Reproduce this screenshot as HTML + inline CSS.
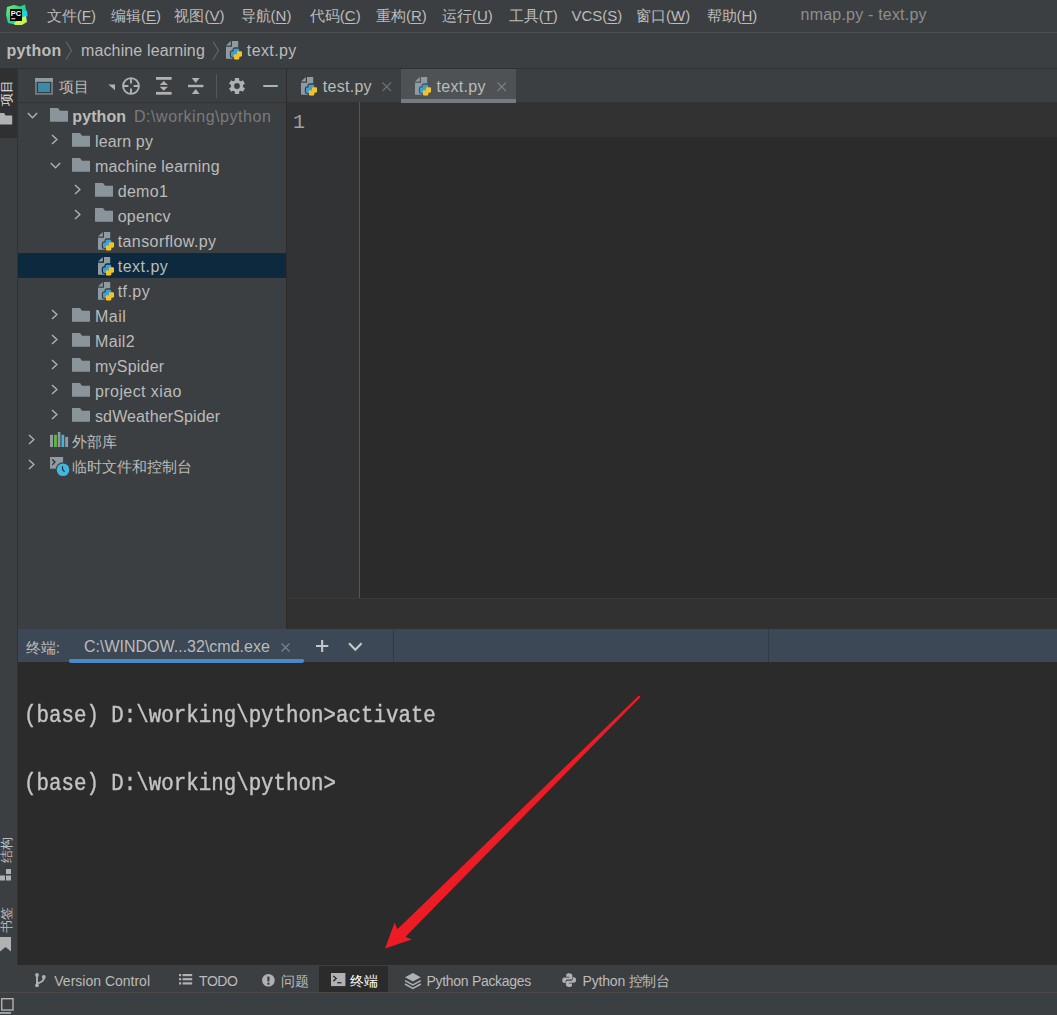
<!DOCTYPE html>
<html><head><meta charset="utf-8">
<style>
*{margin:0;padding:0;box-sizing:border-box}
html,body{width:1057px;height:1015px;overflow:hidden;background:#3c3f41}
body{position:relative;font-family:"Liberation Sans",sans-serif;color:#bbbbbb;font-size:16px}
.a{position:absolute}
.t{position:absolute;white-space:nowrap;line-height:1}
.m{font-family:"Liberation Mono",monospace}
u{text-decoration:underline;text-underline-offset:1.5px;text-decoration-thickness:1px}
svg{position:absolute;overflow:visible}
</style></head><body>
<svg width="0" height="0" style="position:absolute">
<defs>
<symbol id="py" viewBox="0 0 12 12">
<path fill="#3d9fd6" d="M5.9,0.3C3.6,0.3 3.6,1.3 3.6,2.2V3.2H6.2V3.8H2.1C0.9,3.8 0.2,4.7 0.2,6.1C0.2,7.6 0.9,8.4 2.1,8.4H3V7.1C3,6.1 3.8,5.4 4.7,5.4H7.3C8.1,5.4 8.7,4.7 8.7,3.9V2.2C8.7,1.3 8,0.3 5.9,0.3Z"/>
<path fill="#f2c42a" d="M6.1,11.7C8.4,11.7 8.4,10.7 8.4,9.8V8.8H5.8V8.2H9.9C11.1,8.2 11.8,7.3 11.8,5.9C11.8,4.4 11.1,3.6 9.9,3.6H9V4.9C9,5.9 8.2,6.6 7.3,6.6H4.7C3.9,6.6 3.3,7.3 3.3,8.1V9.8C3.3,10.7 4,11.7 6.1,11.7Z"/>
</symbol>
<symbol id="pyl" viewBox="0 0 11.2 11.3">
<path fill="#3d9fd6" d="M4.1,0H6.9Q8.3,0 8.3,1.4V4.1Q8.3,5.5 6.9,5.5H5.2V7.1Q5.2,8.5 3.8,8.5H1.4Q0,8.5 0,7.1V4.4Q0,3 1.4,3H2.7V1.4Q2.7,0 4.1,0Z"/>
<path fill="#f2c42a" d="M7.1,11.3H4.3Q2.9,11.3 2.9,9.9V7.2Q2.9,5.8 4.3,5.8H6V4.2Q6,2.8 7.4,2.8H9.8Q11.2,2.8 11.2,4.2V6.9Q11.2,8.3 9.8,8.3H8.5V9.9Q8.5,11.3 7.1,11.3Z"/>
</symbol>
<mask id="pym" maskUnits="userSpaceOnUse" x="-2" y="-2" width="22" height="24">
<rect x="-2" y="-2" width="22" height="24" fill="#fff"/>
<g transform="translate(4.9,7.4)" stroke="#000" stroke-width="2.2" fill="#000">
<path d="M4.1,0H6.9Q8.3,0 8.3,1.4V4.1Q8.3,5.5 6.9,5.5H5.2V7.1Q5.2,8.5 3.8,8.5H1.4Q0,8.5 0,7.1V4.4Q0,3 1.4,3H2.7V1.4Q2.7,0 4.1,0Z"/>
<path d="M7.1,11.3H4.3Q2.9,11.3 2.9,9.9V7.2Q2.9,5.8 4.3,5.8H6V4.2Q6,2.8 7.4,2.8H9.8Q11.2,2.8 11.2,4.2V6.9Q11.2,8.3 9.8,8.3H8.5V9.9Q8.5,11.3 7.1,11.3Z"/>
</g></mask>
<symbol id="pyf" viewBox="0 0 17 19" overflow="visible">
<g mask="url(#pym)">
<path fill="#8f9ba3" d="M0,4.4L4.8,0.1V4.4Z"/>
<path fill="#8f9ba3" d="M6,0H12.2V17.7H0V5.8H6Z"/>
</g>
<use href="#pyl" x="4.9" y="7.4" width="11.2" height="11.3"/>
</symbol>
<symbol id="fold" viewBox="0 0 18 14">
<path fill="#8a949b" d="M0,0H8L10,2.8H18V13.8H0Z"/>
</symbol>
</defs></svg>

<div class="a" style="left:0;top:32px;width:1057px;height:1px;background:#4d4f51"></div>
<div class="a" style="left:0;top:68px;width:1057px;height:1px;background:#2f3132"></div>
<div class="a" style="left:0;top:69px;width:18px;height:69px;background:#2e3031"></div>
<div class="a" style="left:18px;top:102px;width:268px;height:1px;background:#313335"></div>
<div class="a" style="left:18px;top:253px;width:268px;height:25px;background:#0d293e"></div>
<div class="a" style="left:286px;top:69px;width:1px;height:560px;background:#2b2b2b"></div>
<div class="a" style="left:287px;top:102px;width:770px;height:496px;background:#2b2b2b"></div>
<div class="a" style="left:287px;top:102px;width:73px;height:496px;background:#313335"></div>
<div class="a" style="left:359px;top:102px;width:1px;height:496px;background:#555555"></div>
<div class="a" style="left:360px;top:102px;width:697px;height:35px;background:#323232"></div>
<div class="a" style="left:401px;top:69px;width:115px;height:33px;background:#4e5254"></div>
<div class="a" style="left:401px;top:99px;width:115px;height:4px;background:#767b82"></div>
<div class="a" style="left:287px;top:598px;width:770px;height:1px;background:#3a3a3a"></div>
<div class="a" style="left:287px;top:599px;width:770px;height:30px;background:#313131"></div>
<div class="a" style="left:18px;top:629px;width:1039px;height:33px;background:#3c4855"></div>
<div class="a" style="left:393px;top:629px;width:1px;height:33px;background:#2f3a45"></div>
<div class="a" style="left:768px;top:629px;width:1px;height:33px;background:#2f3a45"></div>
<div class="a" style="left:69px;top:659px;width:234.5px;height:4px;background:#4a88c7;border-radius:2px"></div>
<div class="a" style="left:18px;top:662px;width:1039px;height:303px;background:#2b2b2b"></div><div class="a" style="left:69px;top:659px;width:234.5px;height:4px;background:#4a88c7;border-radius:2px"></div><div class="a" style="left:17px;top:69px;width:1px;height:896px;background:#323232"></div>
<div class="a" style="left:319px;top:966px;width:69px;height:26px;background:#2b2b2b"></div>
<div class="a" style="left:0;top:992px;width:1057px;height:1px;background:#4a4a4a"></div>
<svg style="left:5px;top:4px" width="23" height="22" viewBox="0 0 23 22">
<defs><linearGradient id="lg1" x1="0" y1="0" x2="1" y2="1"><stop offset="0" stop-color="#7ef26a"/><stop offset="0.45" stop-color="#21d789"/><stop offset="1" stop-color="#1fc8a0"/></linearGradient>
<linearGradient id="lg2" x1="0" y1="0" x2="1" y2="1"><stop offset="0" stop-color="#fcf84a"/><stop offset="1" stop-color="#a8f25a"/></linearGradient></defs>
<path fill="url(#lg1)" d="M2,3L9,1L15,2.5L20,0.5L21,6L19,17L12,21L3,19L1,11Z"/>
<path fill="#21d0f0" d="M17,8L22,6.5L22.5,12L18,14Z"/>
<path fill="url(#lg2)" d="M9,19L16,14L21,12L22,18L17,21L10,21Z"/>
<rect x="5" y="5" width="12" height="12" fill="#000"/>
<text x="5.8" y="11.8" font-family="Liberation Sans" font-weight="bold" font-size="7.5" fill="#fff">PC</text>
<rect x="6.3" y="14.3" width="4" height="1" fill="#fff"/>
</svg>
<div class="t" style="left:46.8px;top:8.1px;font-size:15px">文件(<u>F</u>)</div>
<div class="t" style="left:111px;top:8.1px;font-size:15px">编辑(<u>E</u>)</div>
<div class="t" style="left:174.4px;top:8.1px;font-size:15px">视图(<u>V</u>)</div>
<div class="t" style="left:240.6px;top:8.1px;font-size:15px">导航(<u>N</u>)</div>
<div class="t" style="left:309.8px;top:8.1px;font-size:15px">代码(<u>C</u>)</div>
<div class="t" style="left:376px;top:8.1px;font-size:15px">重构(<u>R</u>)</div>
<div class="t" style="left:442px;top:8.1px;font-size:15px">运行(<u>U</u>)</div>
<div class="t" style="left:508.7px;top:8.1px;font-size:15px">工具(<u>T</u>)</div>
<div class="t" style="left:571.4px;top:8.1px;font-size:15px">VCS(<u>S</u>)</div>
<div class="t" style="left:636px;top:8.1px;font-size:15px">窗口(<u>W</u>)</div>
<div class="t" style="left:706.5px;top:8.1px;font-size:15px">帮助(<u>H</u>)</div>
<div class="t" style="left:800.6px;top:7.46px;font-size:16px;color:#8e8e8e;letter-spacing:0.2px">nmap.py - text.py</div>
<div class="t" style="left:6.5px;top:42.96px;font-size:16px;font-weight:bold;letter-spacing:0.3px">python</div>
<svg style="left:65px;top:41px" width="8" height="19"><path d="M1,0.5L6.5,9.5L1,18.5" fill="none" stroke="#60676c" stroke-width="1.2"/></svg>
<div class="t" style="left:81px;top:42.96px;font-size:16px;letter-spacing:0.13px">machine learning</div>
<svg style="left:211.5px;top:41px" width="8" height="19"><path d="M1,0.5L6.5,9.5L1,18.5" fill="none" stroke="#60676c" stroke-width="1.2"/></svg>
<svg style="left:225.8px;top:41px" width="17" height="19"><use href="#pyf" width="17" height="19"/></svg>
<div class="t" style="left:246.8px;top:42.96px;font-size:16px;letter-spacing:0.4px">text.py</div>
<div class="t" style="left:-7.5px;top:86px;font-size:13px;color:#e8e8e8;transform:rotate(-90deg);transform-origin:center">项目</div>
<svg style="left:-6px;top:113.3px" width="19" height="12"><path d="M0,0H10L11.6,2.4H18.2V11.4H0Z" fill="#afb1b3"/></svg>
<div class="t" style="left:-7.5px;top:843px;font-size:13px;color:#bbbbbb;transform:rotate(-90deg);transform-origin:center">结构</div>
<svg style="left:0;top:869px" width="12" height="12"><rect x="6" y="0" width="5" height="5" fill="#afb1b3"/><rect x="0" y="6.5" width="5" height="5" fill="#afb1b3"/><rect x="6" y="6.5" width="5" height="5" fill="#afb1b3"/></svg>
<div class="t" style="left:-7.5px;top:912.5px;font-size:13px;color:#bbbbbb;transform:rotate(-90deg);transform-origin:center">书签</div>
<svg style="left:0;top:937px" width="12" height="15"><path d="M0,0H11V14.5L5.5,10L0,14.5Z" fill="#afb1b3"/></svg>
<svg style="left:35px;top:78.3px" width="18" height="17"><rect x="0" y="0" width="18" height="16.8" fill="#737b82"/><rect x="0" y="0" width="18" height="3.8" fill="#8f9ba3"/><rect x="1.9" y="3.9" width="14.2" height="11" fill="#2f3436"/><rect x="2.9" y="4.8" width="12.2" height="9.2" fill="#3d89a8"/></svg>
<div class="t" style="left:59px;top:79.3px;font-size:15px">项目</div>
<svg style="left:108px;top:84px" width="8" height="7"><path d="M0.3,0.4H7V6.3Z" fill="#afb1b3"/></svg>
<svg style="left:122px;top:77px" width="18" height="18" viewBox="0 0 18 18"><circle cx="9" cy="9" r="7.9" fill="none" stroke="#afb1b3" stroke-width="1.9"/>
<path d="M9,1V6.4M9,11.6V17M1,9H6.4M11.6,9H17" stroke="#afb1b3" stroke-width="1.9"/></svg>
<svg style="left:156px;top:77px" width="16" height="18" viewBox="0 0 16 18"><rect x="0" y="0" width="15.6" height="2.8" fill="#afb1b3"/><rect x="0" y="14.9" width="15.6" height="2.8" fill="#afb1b3"/>
<path d="M7.8,3.9L12,7.9H3.6Z M7.8,13.8L12,9.8H3.6Z" fill="#afb1b3"/></svg>
<svg style="left:188px;top:78px" width="16" height="17" viewBox="0 0 16 17"><rect x="0" y="6.8" width="15.4" height="2.4" fill="#afb1b3"/>
<path d="M3.8,0H11.6L7.7,5Z M3.8,16H11.6L7.7,10.9Z" fill="#afb1b3"/></svg>
<div class="a" style="left:216px;top:74px;width:1px;height:24px;background:#555759"></div>
<svg style="left:228px;top:77px" width="18" height="18" viewBox="-9 -9 18 18"><g fill="#afb1b3"><circle r="6.1"/><rect x="-2.1" y="-8" width="4.2" height="4" transform="rotate(0)"/><rect x="-2.1" y="-8" width="4.2" height="4" transform="rotate(60)"/><rect x="-2.1" y="-8" width="4.2" height="4" transform="rotate(120)"/><rect x="-2.1" y="-8" width="4.2" height="4" transform="rotate(180)"/><rect x="-2.1" y="-8" width="4.2" height="4" transform="rotate(240)"/><rect x="-2.1" y="-8" width="4.2" height="4" transform="rotate(300)"/></g><circle r="2.9" fill="#3c3f41"/></svg>
<div class="a" style="left:262.6px;top:85px;width:15.2px;height:2.2px;background:#afb1b3;border-radius:1px"></div>
<svg style="left:27.2px;top:111.5px" width="12" height="8"><path d="M0.8,1L5.5,5.8L10.2,1" fill="none" stroke="#aeb0b2" stroke-width="1.4"/></svg>
<svg style="left:50px;top:108.2px" width="18" height="14"><use href="#fold" width="18" height="14"/></svg>
<div class="t" style="left:72.3px;top:109.46px;font-size:16px;letter-spacing:0.1px"><b>python</b></div>
<svg style="left:51.0px;top:134.4px" width="8" height="12"><path d="M1,0.9L5.9,5.5L1,10.1" fill="none" stroke="#aeb0b2" stroke-width="1.4"/></svg>
<svg style="left:72px;top:133.2px" width="18" height="14"><use href="#fold" width="18" height="14"/></svg>
<div class="t" style="left:95.0px;top:134.46px;font-size:16px;letter-spacing:0.14px">learn py</div>
<svg style="left:49.9px;top:161.5px" width="12" height="8"><path d="M0.8,1L5.5,5.8L10.2,1" fill="none" stroke="#aeb0b2" stroke-width="1.4"/></svg>
<svg style="left:72px;top:158.2px" width="18" height="14"><use href="#fold" width="18" height="14"/></svg>
<div class="t" style="left:95.0px;top:159.46px;font-size:16px;letter-spacing:0.18px">machine learning</div>
<svg style="left:73.7px;top:184.4px" width="8" height="12"><path d="M1,0.9L5.9,5.5L1,10.1" fill="none" stroke="#aeb0b2" stroke-width="1.4"/></svg>
<svg style="left:95px;top:183.2px" width="18" height="14"><use href="#fold" width="18" height="14"/></svg>
<div class="t" style="left:117.69999999999999px;top:184.46px;font-size:16px;letter-spacing:0.3px">demo1</div>
<svg style="left:73.7px;top:209.4px" width="8" height="12"><path d="M1,0.9L5.9,5.5L1,10.1" fill="none" stroke="#aeb0b2" stroke-width="1.4"/></svg>
<svg style="left:95px;top:208.2px" width="18" height="14"><use href="#fold" width="18" height="14"/></svg>
<div class="t" style="left:117.69999999999999px;top:209.46px;font-size:16px;letter-spacing:0.26px">opencv</div>
<svg style="left:98.0px;top:232.1px" width="17" height="19"><use href="#pyf" width="17" height="19"/></svg>
<div class="t" style="left:117.69999999999999px;top:234.46px;font-size:16px;letter-spacing:0.42px">tansorflow.py</div>
<svg style="left:98.0px;top:257.1px" width="17" height="19"><use href="#pyf" width="17" height="19"/></svg>
<div class="t" style="left:117.69999999999999px;top:259.46px;font-size:16px;letter-spacing:0.5px">text.py</div>
<svg style="left:98.0px;top:282.1px" width="17" height="19"><use href="#pyf" width="17" height="19"/></svg>
<div class="t" style="left:117.69999999999999px;top:284.46px;font-size:16px;letter-spacing:0.45px">tf.py</div>
<svg style="left:51.0px;top:309.4px" width="8" height="12"><path d="M1,0.9L5.9,5.5L1,10.1" fill="none" stroke="#aeb0b2" stroke-width="1.4"/></svg>
<svg style="left:72px;top:308.2px" width="18" height="14"><use href="#fold" width="18" height="14"/></svg>
<div class="t" style="left:95.0px;top:309.46px;font-size:16px;letter-spacing:0.5px">Mail</div>
<svg style="left:51.0px;top:334.4px" width="8" height="12"><path d="M1,0.9L5.9,5.5L1,10.1" fill="none" stroke="#aeb0b2" stroke-width="1.4"/></svg>
<svg style="left:72px;top:333.2px" width="18" height="14"><use href="#fold" width="18" height="14"/></svg>
<div class="t" style="left:95.0px;top:334.46px;font-size:16px;letter-spacing:0.33px">Mail2</div>
<svg style="left:51.0px;top:359.4px" width="8" height="12"><path d="M1,0.9L5.9,5.5L1,10.1" fill="none" stroke="#aeb0b2" stroke-width="1.4"/></svg>
<svg style="left:72px;top:358.2px" width="18" height="14"><use href="#fold" width="18" height="14"/></svg>
<div class="t" style="left:95.0px;top:359.46px;font-size:16px;letter-spacing:0.23px">mySpider</div>
<svg style="left:51.0px;top:384.4px" width="8" height="12"><path d="M1,0.9L5.9,5.5L1,10.1" fill="none" stroke="#aeb0b2" stroke-width="1.4"/></svg>
<svg style="left:72px;top:383.2px" width="18" height="14"><use href="#fold" width="18" height="14"/></svg>
<div class="t" style="left:95.0px;top:384.46px;font-size:16px;letter-spacing:0.42px">project xiao</div>
<svg style="left:51.0px;top:409.4px" width="8" height="12"><path d="M1,0.9L5.9,5.5L1,10.1" fill="none" stroke="#aeb0b2" stroke-width="1.4"/></svg>
<svg style="left:72px;top:408.2px" width="18" height="14"><use href="#fold" width="18" height="14"/></svg>
<div class="t" style="left:95.0px;top:409.46px;font-size:16px;letter-spacing:0.12px">sdWeatherSpider</div>
<div class="t" style="left:134px;top:109.46px;font-size:16px;color:#7a7a7a;letter-spacing:0.55px">D:\working\python</div>
<svg style="left:28.1px;top:434.4px" width="8" height="12"><path d="M1,0.9L5.9,5.5L1,10.1" fill="none" stroke="#aeb0b2" stroke-width="1.4"/></svg>
<svg style="left:49.9px;top:432px" width="19" height="16"><rect x="0" y="2.8" width="3" height="12.2" fill="#8f9ba3"/><rect x="4" y="2.8" width="2.9" height="12.2" fill="#62b543"/><rect x="7.8" y="0" width="2.6" height="15" fill="#8f9ba3"/><rect x="11.5" y="2.8" width="2.7" height="12.2" fill="#40b6e0"/><rect x="15.2" y="4.9" width="2.9" height="10.1" fill="#8f9ba3"/></svg>
<div class="t" style="left:71.8px;top:434.3px;font-size:15px">外部库</div>
<svg style="left:28.1px;top:459.4px" width="8" height="12"><path d="M1,0.9L5.9,5.5L1,10.1" fill="none" stroke="#aeb0b2" stroke-width="1.4"/></svg>
<svg style="left:49.9px;top:456.9px" width="22" height="20"><rect x="0" y="0" width="13.1" height="11.7" fill="#8f9ba3"/><path d="M2.3,2.5L5,5.1L2.3,7.7" fill="none" stroke="#2b2b2b" stroke-width="1.2"/>
<circle cx="13" cy="12.7" r="7.4" fill="#3c3f41"/><circle cx="13" cy="12.7" r="6.3" fill="#40b6e0"/><path d="M12.4,9.4L12.8,12.9L14.6,14.6" fill="none" stroke="#222" stroke-width="1.1"/></svg>
<div class="t" style="left:72px;top:459.3px;font-size:15px">临时文件和控制台</div>
<svg style="left:300.5px;top:77px" width="17" height="19"><use href="#pyf" width="17" height="19"/></svg>
<div class="t" style="left:322.7px;top:78.96px;font-size:16px;letter-spacing:0.3px">test.py</div>
<svg style="left:382px;top:81.6px" width="9.5" height="9.5"><path d="M0.5,0.5L9,9M9,0.5L0.5,9" stroke="#6f7173" stroke-width="1.1"/></svg>
<svg style="left:414.8px;top:77px" width="17" height="19"><use href="#pyf" width="17" height="19"/></svg>
<div class="t" style="left:436.6px;top:78.96px;font-size:16px;letter-spacing:0.3px">text.py</div>
<svg style="left:496.6px;top:81.6px" width="9.5" height="9.5"><path d="M0.5,0.5L9,9M9,0.5L0.5,9" stroke="#7d7f81" stroke-width="1.1"/></svg>
<div class="t m" style="left:293px;top:112.87px;font-size:20px;color:#a2a2a2">1</div>
<div class="t" style="left:25.7px;top:639.8px;font-size:15px">终端:</div>
<div class="t" style="left:84px;top:638.96px;font-size:16px">C:\WINDOW...32\cmd.exe</div>
<svg style="left:281px;top:642.5px" width="9" height="9"><path d="M0.5,0.5L8.5,8.5M8.5,0.5L0.5,8.5" stroke="#7b8592" stroke-width="1.1"/></svg>
<svg style="left:315.9px;top:640px" width="13" height="12"><path d="M6.15,0V12M0,6H12.3" stroke="#c4c7ca" stroke-width="2.1"/></svg>
<svg style="left:347.5px;top:641.5px" width="15" height="10"><path d="M1,1.2L7.3,7.8L13.6,1.2" fill="none" stroke="#c6c9cc" stroke-width="2.1"/></svg>
<div class="t m" style="left:24px;top:707.06px;font-size:20.8px;color:#c4c4c4;-webkit-text-stroke:0.35px #c4c4c4;transform:scaleY(1.16);transform-origin:0 15.9432px">(base) D:\working\python&gt;activate</div>
<div class="t m" style="left:24px;top:774.56px;font-size:20.8px;color:#c4c4c4;-webkit-text-stroke:0.35px #c4c4c4;transform:scaleY(1.16);transform-origin:0 15.9432px">(base) D:\working\python&gt;</div>
<svg style="left:0;top:0" width="1057" height="1015"><path fill="#ed1c24" d="M638.4,696.0L397.4,929.2L394.6,922.6L385.1,948.6L411.6,939.4L405.5,936.8L640.0,697.6Z"/><circle cx="639.2" cy="696.8" r="1.1" fill="#ed1c24"/></svg>
<svg style="left:34.9px;top:973px" width="11" height="15"><circle cx="2" cy="2" r="1.9" fill="#afb1b3"/><circle cx="2" cy="12.3" r="1.9" fill="#afb1b3"/><circle cx="8.8" cy="4" r="1.9" fill="#afb1b3"/>
<path d="M2,2V12.3M8.8,4V5.5C8.8,8.5 5,9.5 2,10.8" fill="none" stroke="#afb1b3" stroke-width="1.9"/></svg>
<div class="t" style="left:54.3px;top:973.65px;font-size:14px">Version Control</div>
<svg style="left:179.2px;top:974.2px" width="14" height="11"><rect x="0" y="0" width="2.2" height="2.2" fill="#afb1b3"/><rect x="3.6" y="0" width="9.6" height="2.2" fill="#afb1b3"/>
<rect x="0" y="4.1" width="2.2" height="2.2" fill="#afb1b3"/><rect x="3.6" y="4.1" width="9.6" height="2.2" fill="#afb1b3"/>
<rect x="0" y="8.3" width="2.2" height="2.2" fill="#afb1b3"/><rect x="3.6" y="8.3" width="9.6" height="2.2" fill="#afb1b3"/></svg>
<div class="t" style="left:199.1px;top:973.65px;font-size:14px;letter-spacing:-0.5px">TODO</div>
<svg style="left:261.5px;top:973.6px" width="13" height="13"><circle cx="6.4" cy="6.3" r="6.3" fill="#afb1b3"/><rect x="5.3" y="2.6" width="2.2" height="4.8" fill="#3c3f41"/><rect x="5.3" y="8.6" width="2.2" height="2.1" fill="#3c3f41"/></svg>
<div class="t" style="left:281px;top:973.65px;font-size:14px">问题</div>
<svg style="left:330.6px;top:972.8px" width="15" height="14"><rect x="0" y="0" width="14.4" height="13.1" fill="#afb1b3"/><path d="M2.3,3L5.2,5.6L2.3,8.2" fill="none" stroke="#2b2b2b" stroke-width="1.3"/><rect x="6.2" y="9.1" width="4.3" height="1.3" fill="#2b2b2b"/></svg>
<div class="t" style="left:350px;top:973.65px;font-size:14px;color:#ffffff">终端</div>
<svg style="left:405px;top:972.8px" width="16" height="16" viewBox="0 0 16 16"><path d="M7.9,0L15.8,4.3L7.9,8.6L0,4.3Z" fill="#afb1b3"/><path d="M0,7.6L7.9,11.9L15.8,7.6" fill="none" stroke="#afb1b3" stroke-width="1.5"/><path d="M0,11L7.9,15.3L15.8,11" fill="none" stroke="#afb1b3" stroke-width="1.5"/></svg>
<div class="t" style="left:426.5px;top:973.65px;font-size:14px;letter-spacing:-0.3px">Python Packages</div>
<svg style="left:562px;top:972.8px" width="14.3" height="14.3" viewBox="0 0 12 12"><g filter="url(#gray)"><path fill="#afb1b3" d="M5.9,0.3C3.6,0.3 3.6,1.3 3.6,2.2V3.2H6.2V3.8H2.1C0.9,3.8 0.2,4.7 0.2,6.1C0.2,7.6 0.9,8.4 2.1,8.4H3V7.1C3,6.1 3.8,5.4 4.7,5.4H7.3C8.1,5.4 8.7,4.7 8.7,3.9V2.2C8.7,1.3 8,0.3 5.9,0.3Z"/>
<path fill="#afb1b3" d="M6.1,11.7C8.4,11.7 8.4,10.7 8.4,9.8V8.8H5.8V8.2H9.9C11.1,8.2 11.8,7.3 11.8,5.9C11.8,4.4 11.1,3.6 9.9,3.6H9V4.9C9,5.9 8.2,6.6 7.3,6.6H4.7C3.9,6.6 3.3,7.3 3.3,8.1V9.8C3.3,10.7 4,11.7 6.1,11.7Z"/></g></svg>
<div class="t" style="left:582.6px;top:973.65px;font-size:14px;letter-spacing:-0.2px">Python 控制台</div>
<svg style="left:1px;top:998px" width="14" height="17"><rect x="0.7" y="0.7" width="11.3" height="11.3" fill="none" stroke="#afb1b3" stroke-width="1.4"/><rect x="-1" y="14" width="11" height="1.9" fill="#a0a4a7"/></svg>
</body></html>
